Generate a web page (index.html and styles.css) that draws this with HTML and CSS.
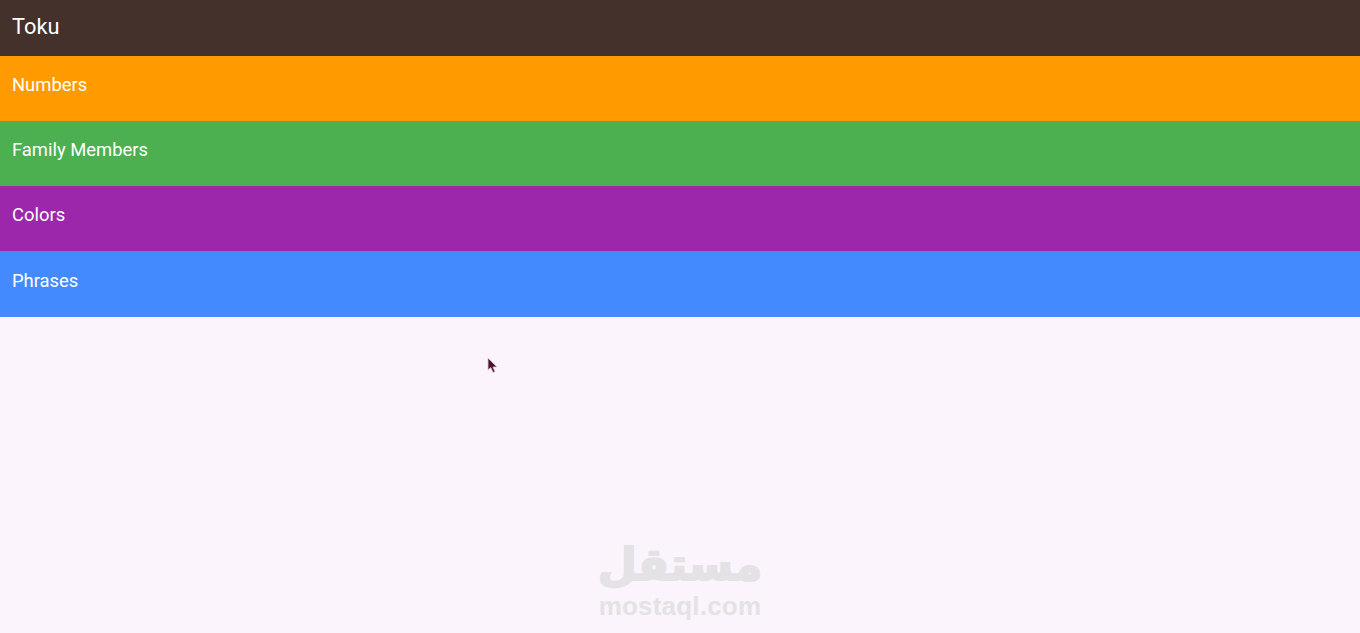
FILE: index.html
```html
<!DOCTYPE html>
<html lang="en">
<head>
<meta charset="utf-8">
<title>Toku</title>
<link rel="stylesheet" href="styles.css">
</head>
<body>
<div class="app">
  <header class="appbar">Toku</header>
  <nav class="categories">
    <div class="category numbers">Numbers</div>
    <div class="category family">Family Members</div>
    <div class="category colors">Colors</div>
    <div class="category phrases">Phrases</div>
  </nav>
  <svg class="cursor" width="12" height="18" viewBox="0 0 12 18" aria-hidden="true">
    <path d="M1 1 L1 13 L3.8 10.6 L6 15.5 L8 14.6 L6 10 L10 10 Z" fill="#4a1630" stroke="#d9c6e0" stroke-width="0.8"/>
  </svg>
  <div class="watermark">
    <div class="wm-arabic" lang="ar" dir="rtl">مستقل</div>
    <div class="wm-latin">mostaql.com</div>
  </div>
</div>
</body>
</html>
```
FILE: styles.css
```css
* { box-sizing: border-box; }
html, body { margin: 0; height: 100%; }
body { background: #fbf4fc; font-family: Roboto, "Liberation Sans", sans-serif; overflow: hidden; }
.app { position: relative; height: 633px; }
.appbar {
  height: 55.5px;
  background: #45312c;
  color: #fff;
  font-size: 21.8px;
  padding: 0 0 3px 12px;
  display: flex;
  align-items: center;
}
.categories { display: flex; flex-direction: column; }
.category {
  height: 65.25px;
  color: #fff;
  font-size: 18.4px;
  padding: 0 12px 7.5px;
  display: flex;
  align-items: center;
}
.numbers { background: #ff9a00; }
.family { background: #4caf50; }
.colors { background: #9c27ab; }
.phrases { background: #448aff; }
.cursor { position: absolute; left: 487px; top: 357px; }
.watermark {
  position: absolute;
  left: 580px;
  top: 538px;
  width: 200px;
  text-align: center;
  color: #e4e2e5;
  font-weight: 700;
}
.wm-arabic {
  font-family: "DejaVu Sans", sans-serif;
  font-size: 45px;
  line-height: 54px;
  -webkit-text-stroke: 2px #e4e2e5;
}
.wm-latin { font-family: "Liberation Sans", sans-serif; font-size: 26px; line-height: 28px; letter-spacing: 0.2px; }
```
